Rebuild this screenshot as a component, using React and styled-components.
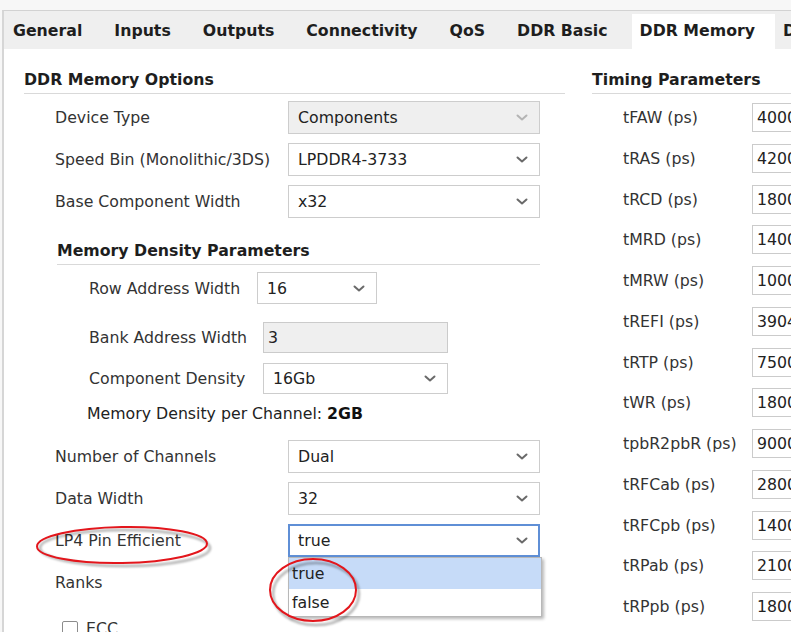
import React from "react";
import styled, { createGlobalStyle } from "styled-components";

const GlobalStyle = createGlobalStyle`
  html, body {
    margin: 0;
    padding: 0;
    background: #f7f7f7;
  }
  body {
    font-family: "DejaVu Sans", "Liberation Sans", sans-serif;
    font-size: 15.75px;
    color: #333;
  }
`;

const Page = styled.div`
  position: relative;
  width: 791px;
  height: 632px;
  overflow: hidden;
  padding-top: 10px;
  box-sizing: border-box;
  background: #f7f7f7;
`;

const Frame = styled.div`
  margin-left: 2px;
  height: 100%;
  border-left: 2px solid #d6d6d6;
  border-top: 1px solid #d2d2d2;
  background: #fff;
  display: flex;
  flex-direction: column;
`;

const TabBar = styled.div`
  display: flex;
  align-items: stretch;
  height: 38px;
  flex-shrink: 0;
  padding-left: 1px;
  background: #efefef;
`;

const Tab = styled.div`
  display: flex;
  align-items: center;
  padding: ${p => (p.$active ? "0 20px 3px 8px" : "0 24px 0 8px")};
  margin-top: ${p => (p.$active ? "3px" : "0")};
  background: ${p => (p.$active ? "#fff" : "transparent")};
  font-weight: bold;
  color: #1e1e1e;
  white-space: nowrap;
`;

const TabDivider = styled.div`
  width: 2px;
  height: 30px;
  align-self: center;
  background: #d6d6d6;
`;

const Content = styled.div`
  display: flex;
  padding: 21px 0 0 20px;
`;

const LeftColumn = styled.div`
  width: 541px;
  flex-shrink: 0;
  display: flex;
  flex-direction: column;
`;

const RightColumn = styled.div`
  margin-left: 27px;
  width: 300px;
  flex-shrink: 0;
  display: flex;
  flex-direction: column;
`;

const SectionTitle = styled.div`
  font-weight: bold;
  line-height: 20px;
  color: #1e1e1e;
  padding-bottom: 3px;
  border-bottom: 1px solid #d9d9d9;
`;

const FieldList = styled.div`
  display: flex;
  flex-direction: column;
  gap: ${p => p.$gap || 9}px;
  margin-top: ${p => p.$mt || 0}px;
`;

const Row = styled.div`
  display: flex;
  align-items: center;
  margin-top: ${p => p.$mt || 0}px;
  padding-left: ${p => p.$indent || 31}px;
`;

const Label = styled.div`
  width: ${p => p.$w || 233}px;
  flex-shrink: 0;
  white-space: nowrap;
  color: #333;
`;

const SelectWrap = styled.div`
  position: relative;
`;

const SelectBox = styled.div`
  display: flex;
  align-items: center;
  justify-content: space-between;
  box-sizing: border-box;
  width: ${p => p.$w || 252}px;
  height: ${p => p.$h || 33}px;
  padding: ${p => (p.$focused ? "0 10px 0 8px" : "0 11px 0 9px")};
  background: ${p => (p.$disabled ? "#efefef" : "#fff")};
  border: ${p => (p.$focused ? "2px solid #5f8fd6" : "1px solid #cdcdcd")};
  color: #222;
  white-space: nowrap;
`;

const ChevronIcon = styled.svg`
  flex-shrink: 0;
  color: ${p => (p.$disabled ? "#b4b4b4" : "#6a6a6a")};
`;

const TextBox = styled.div`
  display: flex;
  align-items: center;
  box-sizing: border-box;
  width: ${p => p.$w || 120}px;
  height: ${p => p.$h || 29}px;
  padding-left: ${p => p.$pad || 4}px;
  background: ${p => (p.$disabled ? "#efefef" : "#fff")};
  border: 1px solid #cbcbcb;
  color: #222;
  white-space: nowrap;
  overflow: hidden;
`;

const SubSection = styled.div`
  margin: 23px 25px 0 33px;
  display: flex;
  flex-direction: column;
`;

const Note = styled.div`
  margin-top: 10px;
  padding-left: 30px;
  line-height: 20px;
  color: #222;
  b {
    color: #111;
  }
`;

const Popup = styled.div`
  position: absolute;
  top: 100%;
  left: 0;
  width: 254px;
  z-index: 2;
  box-sizing: border-box;
  background: #fff;
  border: 1px solid #b8b8b8;
  box-shadow: 2px 2px 3px rgba(0, 0, 0, 0.28);
`;

const PopupItem = styled.div`
  height: ${p => p.$h}px;
  display: flex;
  align-items: center;
  padding-left: 3px;
  background: ${p => (p.$selected ? "#c6dbf8" : "#fff")};
  color: #222;
`;

const CheckRow = styled.div`
  display: flex;
  align-items: center;
  gap: 8px;
  margin-top: 20px;
  padding-left: 38px;
  color: #333;
`;

const CheckBox = styled.div`
  width: 16px;
  height: 16px;
  box-sizing: border-box;
  border: 1px solid #8c8c8c;
  border-radius: 2px;
  background: #fff;
`;

const Overlay = styled.svg`
  position: absolute;
  left: 0;
  top: 0;
  z-index: 5;
  pointer-events: none;
`;

const Chevron = ({ disabled }) => (
  <ChevronIcon width="12" height="7" viewBox="0 0 12 7" $disabled={disabled}>
    <path
      d="M1.5 1.5 L6 5.5 L10.5 1.5"
      fill="none"
      stroke="currentColor"
      strokeWidth="2"
      strokeLinecap="round"
      strokeLinejoin="round"
    />
  </ChevronIcon>
);

const Select = ({ value, w, h, disabled, focused, children }) => (
  <SelectWrap>
    <SelectBox $w={w} $h={h} $disabled={disabled} $focused={focused}>
      <span>{value}</span>
      <Chevron disabled={disabled} />
    </SelectBox>
    {children}
  </SelectWrap>
);

const tabs = ["General", "Inputs", "Outputs", "Connectivity", "QoS", "DDR Basic"];

const timings = [
  ["tFAW (ps)", "40000"],
  ["tRAS (ps)", "42000"],
  ["tRCD (ps)", "18000"],
  ["tMRD (ps)", "14000"],
  ["tMRW (ps)", "10000"],
  ["tREFI (ps)", "3904000"],
  ["tRTP (ps)", "7500"],
  ["tWR (ps)", "18000"],
  ["tpbR2pbR (ps)", "90000"],
  ["tRFCab (ps)", "280000"],
  ["tRFCpb (ps)", "140000"],
  ["tRPab (ps)", "21000"],
  ["tRPpb (ps)", "18000"],
];

export default function App() {
  return (
    <Page>
      <GlobalStyle />
      <Frame>
        <TabBar>
          {tabs.map((t, i) => (
            <React.Fragment key={t}>
              <Tab>{t}</Tab>
              {i < tabs.length - 1 && <TabDivider />}
            </React.Fragment>
          ))}
          <Tab $active>DDR Memory</Tab>
          <Tab>DDR Timing</Tab>
        </TabBar>

        <Content>
          <LeftColumn>
            <SectionTitle>DDR Memory Options</SectionTitle>
            <FieldList $mt={7}>
              <Row>
                <Label>Device Type</Label>
                <Select value="Components" disabled />
              </Row>
              <Row>
                <Label>Speed Bin (Monolithic/3DS)</Label>
                <Select value="LPDDR4-3733" />
              </Row>
              <Row>
                <Label>Base Component Width</Label>
                <Select value="x32" />
              </Row>
            </FieldList>

            <SubSection>
              <SectionTitle>Memory Density Parameters</SectionTitle>
              <Row $mt={7} $indent={32}>
                <Label $w={168}>Row Address Width</Label>
                <Select value="16" w={120} h={32} />
              </Row>
              <Row $mt={18} $indent={32}>
                <Label $w={174}>Bank Address Width</Label>
                <TextBox $w={185} $h={31} $disabled>3</TextBox>
              </Row>
              <Row $mt={10} $indent={32}>
                <Label $w={174}>Component Density</Label>
                <Select value="16Gb" w={185} h={31} />
              </Row>
              <Note>
                Memory Density per Channel: <b>2GB</b>
              </Note>
            </SubSection>

            <FieldList $mt={16}>
              <Row>
                <Label>Number of Channels</Label>
                <Select value="Dual" />
              </Row>
              <Row>
                <Label>Data Width</Label>
                <Select value="32" />
              </Row>
              <Row>
                <Label>LP4 Pin Efficient</Label>
                <Select value="true" focused>
                  <Popup>
                    <PopupItem $h={31} $selected>true</PopupItem>
                    <PopupItem $h={27}>false</PopupItem>
                  </Popup>
                </Select>
              </Row>
              <Row>
                <Label>Ranks</Label>
                <Select value="1" />
              </Row>
            </FieldList>

            <CheckRow>
              <CheckBox />
              <span>ECC</span>
            </CheckRow>
          </LeftColumn>

          <RightColumn>
            <SectionTitle>Timing Parameters</SectionTitle>
            <FieldList $mt={9} $gap={11.75}>
              {timings.map(([name, val]) => (
                <Row key={name}>
                  <Label $w={129}>{name}</Label>
                  <TextBox>{val}</TextBox>
                </Row>
              ))}
            </FieldList>
          </RightColumn>
        </Content>
      </Frame>

      <Overlay width="791" height="632" viewBox="0 0 791 632">
        <defs>
          <filter id="soft" x="-20%" y="-20%" width="140%" height="140%">
            <feGaussianBlur stdDeviation="1.2" />
          </filter>
        </defs>
        <ellipse cx="125" cy="548" rx="85" ry="18" fill="none" stroke="rgba(0,0,0,0.3)" strokeWidth="2.5" filter="url(#soft)" />
        <ellipse cx="122" cy="545" rx="85" ry="18" fill="none" stroke="#e3161c" strokeWidth="2" transform="rotate(-1 122 545)" />
        <ellipse cx="316" cy="594" rx="43" ry="31" fill="none" stroke="rgba(0,0,0,0.3)" strokeWidth="2.5" filter="url(#soft)" />
        <ellipse cx="313" cy="590" rx="43" ry="31" fill="none" stroke="#e3161c" strokeWidth="2" />
      </Overlay>
    </Page>
  );
}
